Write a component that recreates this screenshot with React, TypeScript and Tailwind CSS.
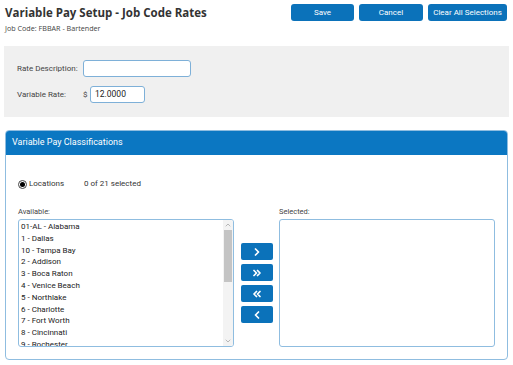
import { ChevronRight, ChevronsRight, ChevronsLeft, ChevronLeft, ChevronUp, ChevronDown } from 'lucide-react';

export default function App() {
  const locations = [
    '01-AL - Alabama',
    '1 - Dallas',
    '10 - Tampa Bay',
    '2 - Addison',
    '3 - Boca Raton',
    '4 - Venice Beach',
    '5 - Northlake',
    '6 - Charlotte',
    '7 - Fort Worth',
    '8 - Cincinnati',
    '9 - Rochester',
  ];

  const moveButtons = [
    <ChevronRight key="r" size={12} strokeWidth={3.5} />,
    <ChevronsRight key="rr" size={12} strokeWidth={3.5} />,
    <ChevronsLeft key="ll" size={12} strokeWidth={3.5} />,
    <ChevronLeft key="l" size={12} strokeWidth={3.5} />,
  ];

  return (
    <div className="w-[513px] h-[365px] bg-white overflow-hidden font-['Roboto'] text-[#333]">
      {/* Page header */}
      <div className="flex justify-between pl-[5px] pr-[6px] pt-[4px]">
        <div>
          <h1 className="font-['Open_Sans'] font-bold text-[11.5px] leading-[18px] text-[#333] whitespace-nowrap">
            Variable Pay Setup - Job Code Rates
          </h1>
          <div className="font-['Open_Sans'] text-[7.2px] leading-[10px] mt-[1px] text-[#444] whitespace-nowrap">
            Job Code: FBBAR - Bartender
          </div>
        </div>
        <div className="flex gap-[5px]">
          <button className="w-[63px] h-[17px] rounded-[3px] bg-[#0b72ba] text-white text-[8px]">Save</button>
          <button className="w-[64px] h-[17px] rounded-[3px] bg-[#0b72ba] text-white text-[8px]">Cancel</button>
          <button className="w-[79px] h-[17px] rounded-[3px] bg-[#0b72ba] text-white text-[8px] whitespace-nowrap">Clear All Selections</button>
        </div>
      </div>

      {/* Rate panel */}
      <div className="mx-[4px] mt-[13px] h-[71px] bg-[#f0f0f0] pl-[13px] pt-[14px] text-[8px] text-[#444]">
        <div className="flex items-center h-[17px]">
          <span className="w-[66px] whitespace-nowrap">Rate Description:</span>
          <div className="w-[108px] h-[17px] bg-white border border-[#7eb0d8] rounded-[3px]" />
        </div>
        <div className="flex items-center h-[17px] mt-[9px]">
          <span className="w-[66px] whitespace-nowrap">Variable Rate:</span>
          <span className="w-[7px]">$</span>
          <div className="w-[55px] h-[17px] bg-white border border-[#7eb0d8] rounded-[3px] pl-[4px] flex items-center text-[8.5px] text-[#222]">
            12.0000
          </div>
        </div>
      </div>

      {/* Classifications panel */}
      <div className="mx-[5px] mt-[13px] h-[230px] border border-[#8fbde0] rounded-[4px] overflow-hidden">
        <div className="h-[24px] bg-[#0b77c2] text-white text-[9px] flex items-center px-[6px]">
          Variable Pay Classifications
        </div>
        <div className="pl-[12px] pt-[23px] text-[8px] text-[#333]">
          <div className="flex items-center h-[12px]">
            <span className="w-[9px] h-[9px] rounded-full border border-[#444] flex items-center justify-center">
              <span className="w-[5px] h-[5px] rounded-full bg-black" />
            </span>
            <span className="ml-[2px] w-[55px]">Locations</span>
            <span>0 of 21 selected</span>
          </div>

          <div className="flex mt-[16px]">
            <div>
              <div className="h-[13px] leading-[11px] text-[7.5px] text-[#444]">Available:</div>
              <div className="w-[216px] h-[128px] border border-[#8fbde0] rounded-[3px] flex overflow-hidden">
                <div className="flex-1 pl-[2px] pt-[1px] text-[8px] leading-[11.8px] text-[#222] overflow-hidden">
                  {locations.map((loc) => (
                    <div key={loc} className="whitespace-nowrap">{loc}</div>
                  ))}
                </div>
                <div className="w-[10px] bg-[#f3f3f3] flex flex-col items-center">
                  <ChevronUp size={8} className="text-[#999] mt-[1px]" />
                  <div className="w-[8px] h-[52px] bg-[#c4c4c4] mt-[1px]" />
                  <div className="flex-1" />
                  <ChevronDown size={8} className="text-[#999] mb-[1px]" />
                </div>
              </div>
            </div>

            <div className="ml-[7px] pt-[37px] flex flex-col gap-[4px]">
              {moveButtons.map((icon, i) => (
                <button key={i} className="w-[32px] h-[17px] rounded-[2px] bg-[#0b72ba] text-white flex items-center justify-center">
                  {icon}
                </button>
              ))}
            </div>

            <div className="ml-[6px]">
              <div className="h-[13px] leading-[11px] text-[7.5px] text-[#444]">Selected:</div>
              <div className="w-[216px] h-[128px] border border-[#8fbde0] rounded-[3px]" />
            </div>
          </div>
        </div>
      </div>
    </div>
  );
}
